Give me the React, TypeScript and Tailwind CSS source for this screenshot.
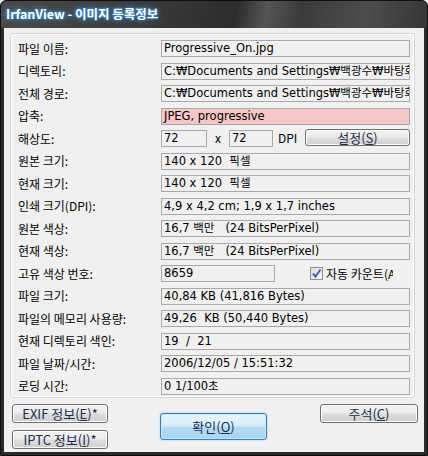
const rows: { label: string; value?: string; pink?: boolean; kind?: "dpi" | "colors" }[] = [
  { label: "파일 이름:", value: "Progressive_On.jpg" },
  { label: "디렉토리:", value: "C:₩Documents and Settings₩백광수₩바탕화면₩" },
  { label: "전체 경로:", value: "C:₩Documents and Settings₩백광수₩바탕화면₩Progressive_On.jpg" },
  { label: "압축:", value: "JPEG, progressive", pink: true },
  { label: "해상도:", kind: "dpi" },
  { label: "원본 크기:", value: "140 x 120  픽셀" },
  { label: "현재 크기:", value: "140 x 120  픽셀" },
  { label: "인쇄 크기(DPI):", value: "4,9 x 4,2 cm; 1,9 x 1,7 inches" },
  { label: "원본 색상:", value: "16,7 백만   (24 BitsPerPixel)" },
  { label: "현재 색상:", value: "16,7 백만   (24 BitsPerPixel)" },
  { label: "고유 색상 번호:", kind: "colors" },
  { label: "파일 크기:", value: "40,84 KB (41,816 Bytes)" },
  { label: "파일의 메모리 사용량:", value: "49,26  KB (50,440 Bytes)" },
  { label: "현재 디렉토리 색인:", value: "19  /  21" },
  { label: "파일 날짜/시간:", value: "2006/12/05 / 15:51:32" },
  { label: "로딩 시간:", value: "0 1/100초" },
];

function Field({ value, className = "" }: { value: string; className?: string }) {
  return (
    <div
      className={`h-[17px] border border-[#a9a9a9] pl-[2px] overflow-hidden whitespace-pre font-['DejaVu_Sans','Noto_Sans_CJK_KR',sans-serif] text-[11.5px] leading-[15px] ${className}`}
    >
      {value}
    </div>
  );
}

function Button({
  children,
  className = "",
  primary = false,
}: {
  children: React.ReactNode;
  className?: string;
  primary?: boolean;
}) {
  return (
    <div
      className={
        primary
          ? `flex items-center justify-center rounded-[3px] border border-[#3c7fb1] bg-[linear-gradient(#e9f5fc_0%,#d6edfb_48%,#b4dcf4_52%,#a6d4f1_100%)] shadow-[inset_0_0_0_1px_#c5e6f8,0_0_2px_#7fc6ee] text-[13px] text-[#1c2e4c] ${className}`
          : `flex items-center justify-center rounded-[3px] border border-[#707070] bg-[linear-gradient(#f3f3f3_0%,#ebebeb_48%,#dddddd_52%,#cfcfcf_100%)] shadow-[inset_0_0_0_1px_#fbfbfb] text-[13px] text-[#1c2e4c] ${className}`
      }
    >
      {children}
    </div>
  );
}

export default function App() {
  return (
    <div className="w-[428px] h-[456px] flex flex-col bg-[#2a2a2a] rounded-t-[6px] border border-[#0f0f0f] font-['Noto_Sans_CJK_KR','Noto_Sans',sans-serif] text-black">
      <div className="h-[27px] flex items-center px-[5px] rounded-t-[6px] bg-[linear-gradient(100deg,#4a4a4a_0%,#3a3a3a_35%,#2c2c2c_55%,#555_62%,#3b3b3b_70%,#4d4d4d_85%,#363636_100%)]">
        <span className="text-[12.5px] font-bold text-white [text-shadow:0_0_3px_#3aa0ff,0_0_6px_#3aa0ff]">
          IrfanView - 이미지 등록정보
        </span>
      </div>

      <div className="mx-[3px] mb-[3px] flex-1 bg-[#f0f0f0] flex flex-col">
        <div className="ml-[6px] mr-[9px] mt-[5px] h-[365px] rounded-[3px] border border-[#d0d7dc] shadow-[inset_0_0_0_1px_#ffffff] pl-[7px] pr-[4px] pt-[6px]">
          {rows.map((row) => (
            <div key={row.label} className="h-[22.5px] grid grid-cols-[143px_1fr] items-start">
              <div className="h-[16px] flex items-center text-[12px] leading-[15px] whitespace-nowrap">
                {row.label}
              </div>
              {row.kind === "dpi" ? (
                <div className="flex items-start h-[17px]">
                  <Field value="72" className="w-[46px]" />
                  <span className="w-[22px] text-center text-[12px] leading-[16px]">x</span>
                  <Field value="72" className="w-[44px]" />
                  <span className="ml-[5px] text-[12px] leading-[16px]">DPI</span>
                  <Button className="ml-auto w-[105px] h-[17px] -mt-[1px] text-[12px] leading-[15px]">
                    설정(<u>S</u>)
                  </Button>
                </div>
              ) : row.kind === "colors" ? (
                <div className="flex items-start h-[17px]">
                  <Field value="8659" className="w-[114px]" />
                  <div className="ml-[35px] flex items-center h-[17px] w-[83px] overflow-hidden whitespace-nowrap">
                    <div className="w-[13px] h-[13px] shrink-0 border border-[#8f8f8f] bg-[linear-gradient(135deg,#dcdcdc,#fbfbfb)] flex items-center justify-center">
                      <svg width="11" height="11" viewBox="0 0 11 11">
                        <path d="M2 5.5 L4.5 8.5 L9.5 1.5" fill="none" stroke="#4a5fa8" strokeWidth="2" />
                      </svg>
                    </div>
                    <span className="ml-[3px] text-[12px] leading-[15px]">자동 카운트(A)</span>
                  </div>
                </div>
              ) : (
                <Field value={row.value!} className={row.pink ? "bg-[#f7c6c6]" : ""} />
              )}
            </div>
          ))}
        </div>

        <div className="flex items-start pl-[8px] pr-[6px] mt-[6px]">
          <div className="flex flex-col gap-[7px]">
            <Button className="w-[96px] h-[19px] leading-[17px]">
              EXIF 정보(<u>E</u>)*
            </Button>
            <Button className="w-[96px] h-[19px] leading-[17px]">
              IPTC 정보(<u>I</u>)*
            </Button>
          </div>
          <Button primary className="ml-[52px] mt-[9px] w-[107px] h-[27px]">
            확인(<u>O</u>)
          </Button>
          <Button className="ml-auto w-[98px] h-[19px] leading-[17px]">
            주석(<u>C</u>)
          </Button>
        </div>
      </div>
    </div>
  );
}
